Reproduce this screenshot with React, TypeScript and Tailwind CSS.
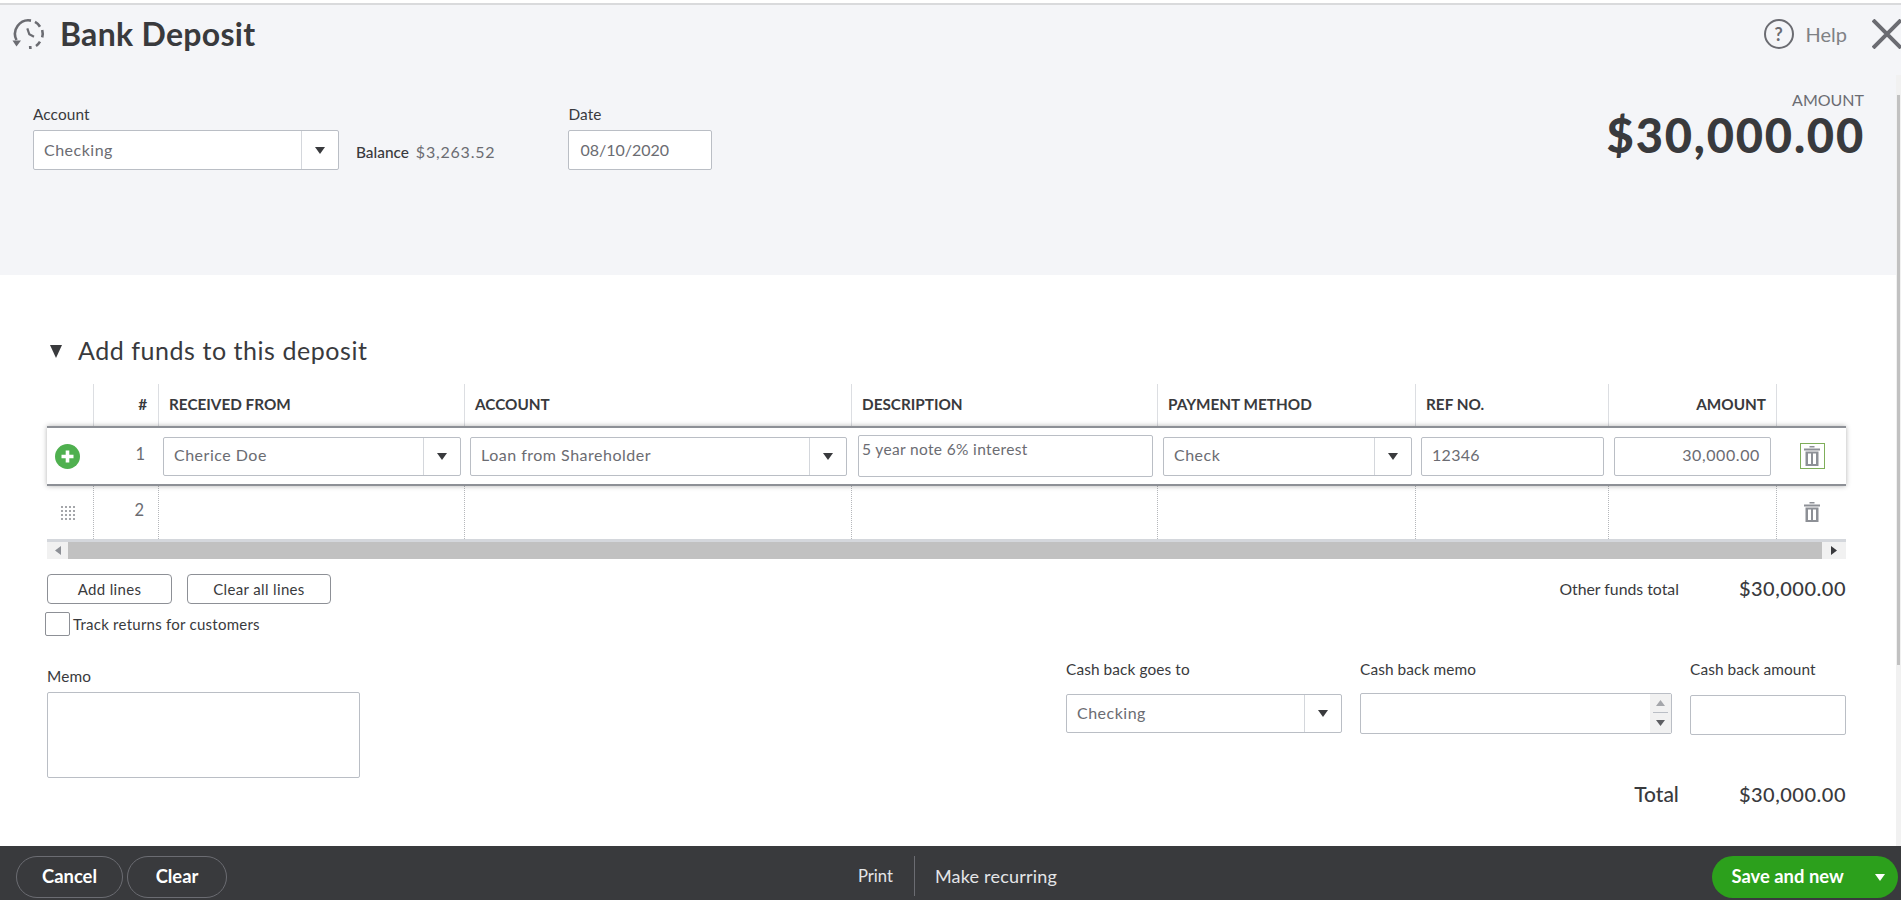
import React from 'react';

const font = 'font-["Lato",_"Liberation_Sans",_sans-serif]';

function Caret({ className = '' }: { className?: string }) {
  return (
    <svg width="10" height="7" viewBox="0 0 10 7" preserveAspectRatio="none" className={className}>
      <polygon points="0,0 10,0 5,7" fill="currentColor" />
    </svg>
  );
}

function Select({ value, className, textClass = 'pb-[1px]' }: { value: string; className: string; textClass?: string }) {
  return (
    <div className={`flex h-[39px] rounded-[2px] border border-[#babec5] bg-white ${className}`}>
      <div className={`flex flex-1 items-center pl-[10px] text-[16px] tracking-[0.5px] text-[#6b6c72] ${textClass}`}>{value}</div>
      <div className="flex w-[37px] items-center justify-center border-l border-[#d4d7dc] text-[#393a3d]">
        <Caret />
      </div>
    </div>
  );
}

function TrashIcon() {
  return (
    <svg width="16" height="20" viewBox="0 0 16 20" className="text-[#8d9096]">
      <rect x="5.5" y="0" width="5" height="1.5" fill="currentColor" />
      <rect x="0" y="2.5" width="16" height="2" fill="currentColor" />
      <path d="M1.5 5.5h13V20h-13z M4 7.5V18h3V7.5z M9 7.5V18h3V7.5z" fill="currentColor" fillRule="evenodd" />
    </svg>
  );
}

function HistoryIcon() {
  return (
    <svg width="34" height="30" viewBox="0 0 34 30" fill="none" stroke="#6b6c72" strokeWidth="2.6">
      <path d="M4.5 21A13.5 13.5 0 0 1 19 1.6" />
      <path d="M23 2.9A13.5 13.5 0 0 1 28 7.7" />
      <path d="M30.2 11A13.5 13.5 0 0 1 30.2 18.3" />
      <path d="M28 22.7A13.5 13.5 0 0 1 24 27" />
      <path d="M19.6 28.4L17 28.6" strokeWidth="3" />
      <path d="M15.3 9.3L17.3 15.3L22 17.7" strokeWidth="2.2" />
      <polygon points="0.5,21.5 9,21.5 4.5,27.5" fill="#6b6c72" stroke="none" />
    </svg>
  );
}

const headCell = 'flex items-center border-r border-[#dcdee2] pb-[2px] text-[15.3px] font-bold text-[#393a3d]';
const dotCell = 'flex items-center border-r border-dotted border-[#b5b7bb]';
const cols = 'grid-cols-[47px_65px_306px_387px_306px_258px_193px_168px_70px]';
const label = 'h-[20px] text-[15.4px] leading-[20px] tracking-[0.1px]';

export default function App() {
  return (
    <div className={`${font} relative flex h-[900px] w-[1901px] flex-col overflow-hidden bg-white text-[#393a3d]`}>
      <div className="mt-[3px] h-[2px] bg-[#d9dadc]" />

      {/* Header */}
      <header className="h-[270px] bg-[#f4f5f8]">
        <div className="flex h-[58px] items-center pl-[12px]">
          <HistoryIcon />
          <h1 className="ml-[14px] text-[32px] font-bold tracking-[0.3px] text-[#393a3d]">Bank Deposit</h1>
          <div className="ml-auto flex items-center text-[#6b6c72]">
            <div className="flex h-[30px] w-[30px] items-center justify-center rounded-full border-[2.5px] border-[#6b6c72] text-[18px] font-bold">?</div>
            <span className="ml-[12px] text-[20px] text-[#7f8185]">Help</span>
            <svg width="29" height="30" viewBox="0 0 29 30" className="ml-[25px]" stroke="#6b6c72" strokeWidth="4">
              <path d="M1 1l28 28M1 29L29 1" />
            </svg>
          </div>
        </div>
        <div className="flex items-start pl-[33px] pr-[36px] pt-[41px]">
          <div>
            <div className={label}>Account</div>
            <Select value="Checking" className="mt-[6px] !h-[40px] w-[306px]" />
          </div>
          <div className="ml-[17px] mt-[36px] text-[15.4px] font-medium">
            Balance <span className="ml-[3px] text-[16px] font-normal tracking-[0.8px] text-[#6b6c72]">$3,263.52</span>
          </div>
          <div className="ml-[73px]">
            <div className={label}>Date</div>
            <div className="mt-[6px] flex h-[40px] w-[144px] items-center rounded-[2px] border border-[#babec5] bg-white pl-[11px] text-[16px] text-[#6b6c72]">
              08/10/2020
            </div>
          </div>
          <div className="ml-auto -mt-[14px] text-right">
            <div className="pr-[1px] text-[16px] leading-[20px] text-[#6b6c72]">AMOUNT</div>
            <div className="text-[47px] font-black leading-[50px] tracking-[1.8px] text-[#393a3d]">$30,000.00</div>
          </div>
        </div>
      </header>

      {/* Main form */}
      <main className="flex-1 pl-[47px] pr-[55px]">
        <div className="mt-[61px] flex h-[30px] items-center">
          <Caret className="ml-[3px] h-[13px] w-[12px]" />
          <h2 className="ml-[16px] text-[25px] tracking-[0.55px] text-[#393a3d]">Add funds to this deposit</h2>
        </div>

        <div className={`mt-[18px] grid h-[42px] ${cols}`}>
          <div className={headCell} />
          <div className={`${headCell} justify-end pr-[11px]`}>#</div>
          <div className={`${headCell} pl-[10px]`}>RECEIVED FROM</div>
          <div className={`${headCell} pl-[10px]`}>ACCOUNT</div>
          <div className={`${headCell} pl-[10px]`}>DESCRIPTION</div>
          <div className={`${headCell} pl-[10px]`}>PAYMENT METHOD</div>
          <div className={`${headCell} pl-[10px]`}>REF NO.</div>
          <div className={`${headCell} justify-end pr-[10px]`}>AMOUNT</div>
          <div />
        </div>

        <div className={`relative grid h-[60px] border-y-2 border-[#8d9096] shadow-[0_0_5px_rgba(0,0,0,0.3)] ${cols}`}>
          <div className="flex items-center justify-center pr-[7px]">
            <svg width="25" height="25" viewBox="0 0 25 25">
              <circle cx="12.5" cy="12.5" r="12.5" fill="#4fb04f" />
              <path d="M12.5 6.5v12M6.5 12.5h12" stroke="#fff" strokeWidth="3.6" />
            </svg>
          </div>
          <div className="flex items-center justify-end pb-[4px] pr-[14px] text-[16.5px] text-[#6b6c72]">1</div>
          <div className="flex items-center pl-[4px]"><Select value="Cherice Doe" textClass="pb-[3px]" className="w-[298px]" /></div>
          <div className="flex items-center pl-[5px]"><Select value="Loan from Shareholder" textClass="pb-[3px]" className="w-[377px]" /></div>
          <div className="flex items-center pl-[6px]">
            <div className="h-[42px] w-[295px] rounded-[2px] border border-[#babec5] pl-[3px] pt-[3px] text-[15.5px] leading-[20px] tracking-[0.35px] text-[#6b6c72]">
              5 year note 6% interest
            </div>
          </div>
          <div className="flex items-center pl-[5px]"><Select value="Check" textClass="pb-[3px]" className="w-[249px]" /></div>
          <div className="flex items-center pl-[5px]">
            <div className="flex h-[39px] w-[183px] items-center rounded-[2px] border border-[#babec5] pb-[3px] pl-[10px] text-[16px] tracking-[0.3px] text-[#6b6c72]">12346</div>
          </div>
          <div className="flex items-center pl-[5px]">
            <div className="flex h-[39px] w-[157px] items-center justify-end rounded-[2px] border border-[#babec5] pb-[3px] pr-[10px] text-[16px] tracking-[0.6px] text-[#6b6c72]">30,000.00</div>
          </div>
          <div className="flex items-center justify-center">
            <div className="flex h-[26px] w-[25px] items-center justify-center border border-[#7fae5a]"><TrashIcon /></div>
          </div>
        </div>

        <div className={`grid h-[53px] ${cols}`}>
          <div className={`${dotCell} justify-center pr-[5px]`}>
            <div className="grid grid-cols-4 gap-[2px]">
              {Array.from({ length: 16 }).map((_, i) => (
                <span key={i} className="h-[2px] w-[2px] bg-[#a4a6aa]" />
              ))}
            </div>
          </div>
          <div className={`${dotCell} justify-end pb-[4px] pr-[14px] text-[16.5px] text-[#6b6c72]`}>2</div>
          <div className={dotCell} />
          <div className={dotCell} />
          <div className={dotCell} />
          <div className={dotCell} />
          <div className={dotCell} />
          <div className={dotCell} />
          <div className="flex items-center justify-center pb-[1px]"><TrashIcon /></div>
        </div>

        <div className="h-[3px] bg-[#d4d7dc]" />
        <div className="flex h-[17px] bg-[#f1f1f1]">
          <div className="flex w-[21px] items-center justify-center text-[#8d9096]">
            <svg width="6" height="9" viewBox="0 0 6 9"><polygon points="6,0 6,9 0,4.5" fill="currentColor" /></svg>
          </div>
          <div className="flex-1 bg-[#c1c1c1]" />
          <div className="flex w-[24px] items-center justify-center text-[#393a3d]">
            <svg width="6" height="9" viewBox="0 0 6 9"><polygon points="0,0 6,4.5 0,9" fill="currentColor" /></svg>
          </div>
        </div>

        <div className="mt-[15px] flex items-center">
          <button className="h-[30px] w-[125px] rounded-[4px] border border-[#8d9096] text-[15px] tracking-[0.35px]">Add lines</button>
          <button className="ml-[15px] h-[30px] w-[144px] rounded-[4px] border border-[#8d9096] text-[15px] tracking-[0.35px]">Clear all lines</button>
          <span className="ml-auto text-[15.8px]">Other funds total</span>
          <span className="ml-[60px] -mt-[3px] text-[20px] font-medium tracking-[0.5px]">$30,000.00</span>
        </div>

        <div className="-ml-[2px] mt-[8px] flex items-center">
          <div className="h-[24px] w-[25px] rounded-[2px] border border-[#8d9096]" />
          <span className="ml-[3px] mt-[1px] text-[15px] tracking-[0.25px]">Track returns for customers</span>
        </div>

        <div className="mt-[30px] flex items-start">
          <div>
            <div className={label}>Memo</div>
            <div className="mt-[6px] h-[86px] w-[313px] rounded-[2px] border border-[#babec5]" />
          </div>
          <div className="ml-[706px] -mt-[7px]">
            <div className={label}>Cash back goes to</div>
            <Select value="Checking" className="mt-[15px] w-[276px]" />
          </div>
          <div className="ml-[18px] -mt-[7px]">
            <div className={label}>Cash back memo</div>
            <div className="mt-[14px] flex h-[41px] w-[312px] justify-end rounded-[2px] border border-[#babec5]">
              <div className="flex w-[21px] flex-col items-center bg-[#f1f1f1] text-[8px]">
                <div className="flex h-[19px] items-center border-b border-[#babec5] px-[3px] text-[#a4a6aa]"><Caret className="h-[6px] w-[9px] rotate-180" /></div>
                <div className="flex flex-1 items-center text-[#5d5e62]"><Caret className="h-[6px] w-[9px]" /></div>
              </div>
            </div>
          </div>
          <div className="ml-[18px] -mt-[7px]">
            <div className={label}>Cash back amount</div>
            <div className="mt-[16px] h-[40px] w-[156px] rounded-[2px] border border-[#babec5]" />
          </div>
        </div>

        <div className="flex items-center justify-end">
          <span className="text-[21px] font-medium">Total</span>
          <span className="ml-[60px] text-[20px] font-medium tracking-[0.5px]">$30,000.00</span>
        </div>
      </main>

      {/* Footer */}
      <footer className="flex h-[54px] items-start bg-[#393a3d] pl-[16px] pr-[3.5px] pt-[10px] text-white">
        <button className="h-[42px] w-[107px] rounded-full border border-[#6b6c72] text-[18.4px] font-bold">Cancel</button>
        <button className="ml-[4px] h-[42px] w-[100px] rounded-full border border-[#6b6c72] text-[18.4px] font-bold">Clear</button>
        <span className="ml-[631px] mt-[8px] text-[16.6px] text-[#e4e5e8]">Print</span>
        <div className="ml-[21px] h-[40px] w-px bg-[#6b6c72]" />
        <span className="ml-[20px] mt-[7px] text-[18px] tracking-[0.2px] text-[#e4e5e8]">Make recurring</span>
        <button className="ml-auto flex h-[42px] w-[186px] items-center rounded-full bg-[#2ca01c] pl-[20px] text-[18.4px] font-bold">
          Save and new
          <Caret className="ml-[31px]" />
        </button>
      </footer>

      {/* page scrollbar */}
      <div className="absolute right-0 top-[75px] h-[771px] w-[5px] bg-[#f1f1f1]">
        <div className="ml-[1px] mt-[20px] h-[570px] w-[3px] bg-[#c1c1c1]" />
      </div>
    </div>
  );
}
